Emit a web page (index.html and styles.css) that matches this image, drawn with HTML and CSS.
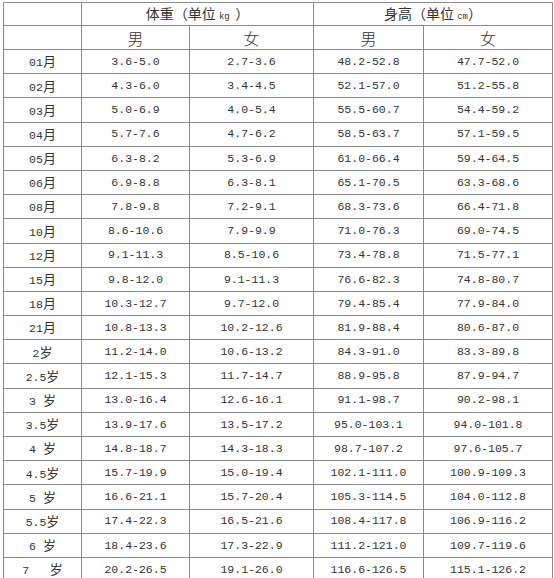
FILE: index.html
```html
<!DOCTYPE html>
<html lang="zh">
<head>
<meta charset="utf-8">
<link rel="stylesheet" href="styles.css">
</head>
<body>
<table class="chart">
  <colgroup>
    <col class="c-age"><col class="c-w1"><col class="c-w2"><col class="c-h1"><col class="c-h2">
  </colgroup>
  <thead>
    <tr class="head1">
      <th></th>
      <th colspan="2">体重（单位 <span class="unit">kg </span>）</th>
      <th colspan="2">身高（单位 <span class="unit">cm</span>）</th>
    </tr>
    <tr class="head2">
      <th></th>
      <th>男</th><th>女</th><th>男</th><th>女</th>
    </tr>
  </thead>
  <tbody>
    <tr><td class="age"><span class="n">01</span>月</td><td>3.6-5.0</td><td>2.7-3.6</td><td>48.2-52.8</td><td>47.7-52.0</td></tr>
    <tr><td class="age"><span class="n">02</span>月</td><td>4.3-6.0</td><td>3.4-4.5</td><td>52.1-57.0</td><td>51.2-55.8</td></tr>
    <tr><td class="age"><span class="n">03</span>月</td><td>5.0-6.9</td><td>4.0-5.4</td><td>55.5-60.7</td><td>54.4-59.2</td></tr>
    <tr><td class="age"><span class="n">04</span>月</td><td>5.7-7.6</td><td>4.7-6.2</td><td>58.5-63.7</td><td>57.1-59.5</td></tr>
    <tr><td class="age"><span class="n">05</span>月</td><td>6.3-8.2</td><td>5.3-6.9</td><td>61.0-66.4</td><td>59.4-64.5</td></tr>
    <tr><td class="age"><span class="n">06</span>月</td><td>6.9-8.8</td><td>6.3-8.1</td><td>65.1-70.5</td><td>63.3-68.6</td></tr>
    <tr><td class="age"><span class="n">08</span>月</td><td>7.8-9.8</td><td>7.2-9.1</td><td>68.3-73.6</td><td>66.4-71.8</td></tr>
    <tr><td class="age"><span class="n">10</span>月</td><td>8.6-10.6</td><td>7.9-9.9</td><td>71.0-76.3</td><td>69.0-74.5</td></tr>
    <tr><td class="age"><span class="n">12</span>月</td><td>9.1-11.3</td><td>8.5-10.6</td><td>73.4-78.8</td><td>71.5-77.1</td></tr>
    <tr><td class="age"><span class="n">15</span>月</td><td>9.8-12.0</td><td>9.1-11.3</td><td>76.6-82.3</td><td>74.8-80.7</td></tr>
    <tr><td class="age"><span class="n">18</span>月</td><td>10.3-12.7</td><td>9.7-12.0</td><td>79.4-85.4</td><td>77.9-84.0</td></tr>
    <tr><td class="age"><span class="n">21</span>月</td><td>10.8-13.3</td><td>10.2-12.6</td><td>81.9-88.4</td><td>80.6-87.0</td></tr>
    <tr><td class="age"><span class="n">2</span>岁</td><td>11.2-14.0</td><td>10.6-13.2</td><td>84.3-91.0</td><td>83.3-89.8</td></tr>
    <tr><td class="age"><span class="n">2.5</span>岁</td><td>12.1-15.3</td><td>11.7-14.7</td><td>88.9-95.8</td><td>87.9-94.7</td></tr>
    <tr><td class="age"><span class="n">3 </span>岁</td><td>13.0-16.4</td><td>12.6-16.1</td><td>91.1-98.7</td><td>90.2-98.1</td></tr>
    <tr><td class="age"><span class="n">3.5</span>岁</td><td>13.9-17.6</td><td>13.5-17.2</td><td>95.0-103.1</td><td>94.0-101.8</td></tr>
    <tr><td class="age"><span class="n">4 </span>岁</td><td>14.8-18.7</td><td>14.3-18.3</td><td>98.7-107.2</td><td>97.6-105.7</td></tr>
    <tr><td class="age"><span class="n">4.5</span>岁</td><td>15.7-19.9</td><td>15.0-19.4</td><td>102.1-111.0</td><td>100.9-109.3</td></tr>
    <tr><td class="age"><span class="n">5 </span>岁</td><td>16.6-21.1</td><td>15.7-20.4</td><td>105.3-114.5</td><td>104.0-112.8</td></tr>
    <tr><td class="age"><span class="n">5.5</span>岁</td><td>17.4-22.3</td><td>16.5-21.6</td><td>108.4-117.8</td><td>106.9-116.2</td></tr>
    <tr><td class="age"><span class="n">6 </span>岁</td><td>18.4-23.6</td><td>17.3-22.9</td><td>111.2-121.0</td><td>109.7-119.6</td></tr>
    <tr><td class="age"><span class="n">7&nbsp;&nbsp;&nbsp;</span>岁</td><td>20.2-26.5</td><td>19.1-26.0</td><td>116.6-126.5</td><td>115.1-126.2</td></tr>
  </tbody>
</table>
</body>
</html>
```
FILE: styles.css
```css
html, body {
  margin: 0;
  padding: 0;
  background: #fff;
  overflow: hidden;
}
body {
  padding: 2px 0 0 3px;
  width: 554px;
  height: 578px;
  box-sizing: border-box;
}
.chart {
  border-collapse: collapse;
  table-layout: fixed;
  width: 549px;
  color: #333;
}
.c-age { width: 78px; }
.c-w1 { width: 108px; }
.c-w2 { width: 124px; }
.c-h1 { width: 110px; }
.c-h2 { width: 129px; }
.chart th, .chart td {
  border: 1px solid #8c8c8c;
  padding: 0;
  text-align: center;
  vertical-align: middle;
  white-space: pre;
  overflow: hidden;
}
.chart th {
  font-family: "Noto Sans CJK SC", sans-serif;
  font-weight: normal;
  line-height: 1;
}
.head1 { height: 23px; }
.head1 th { font-size: 14px; }
.head2 { height: 24px; }
.head2 th { font-size: 16px; font-weight: 300; }
.unit {
  font-family: "Liberation Mono", monospace;
  font-size: 9px;
}
.chart tbody tr { height: 24.2px; }
.chart td {
  font-family: "Liberation Mono", "Noto Sans CJK SC", monospace;
  font-size: 11.5px;
  line-height: 1;
}
.chart td.age {
  font-family: "Noto Sans CJK SC", sans-serif;
  font-size: 13px;
}
.age .n {
  font-family: "Liberation Mono", monospace;
  font-size: 11.5px;
}
```
